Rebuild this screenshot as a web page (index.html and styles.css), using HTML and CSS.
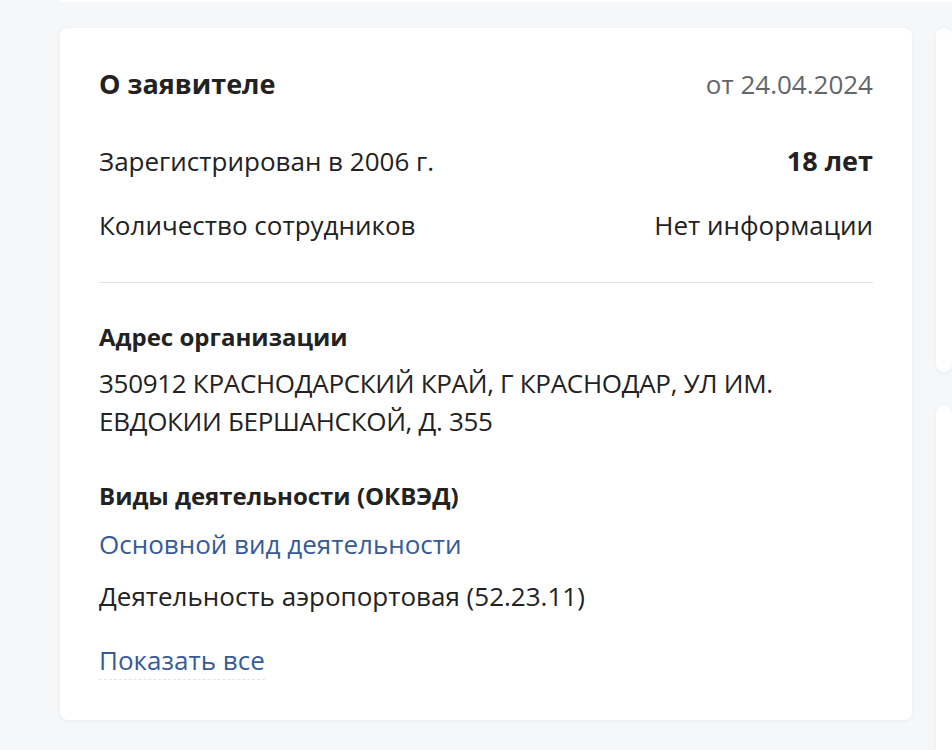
FILE: index.html
```html
<!DOCTYPE html>
<html lang="ru">
<head>
<meta charset="utf-8">
<link rel="stylesheet" href="styles.css">
</head>
<body>
<div class="page">
  <div class="prev-card"></div>
  <div class="layout">
    <section class="card">
      <div class="head">
        <h2 class="title">О заявителе</h2>
        <span class="date">от 24.04.2024</span>
      </div>
      <div class="rows">
        <div class="row">
          <span>Зарегистрирован в 2006 г.</span>
          <span class="strong">18 лет</span>
        </div>
        <div class="row">
          <span>Количество сотрудников</span>
          <span>Нет информации</span>
        </div>
      </div>
      <hr class="divider">
      <h3 class="sub">Адрес организации</h3>
      <p class="text address">350912 КРАСНОДАРСКИЙ КРАЙ, Г КРАСНОДАР, УЛ ИМ. ЕВДОКИИ БЕРШАНСКОЙ, Д. 355</p>
      <h3 class="sub sub-okved">Виды деятельности (ОКВЭД)</h3>
      <div class="link-label">Основной вид деятельности</div>
      <p class="text okved">Деятельность аэропортовая (52.23.11)</p>
      <a class="show-all" href="#">Показать все</a>
    </section>
    <aside class="side">
      <div class="side-card side-card-1"></div>
      <div class="side-card side-card-2"></div>
    </aside>
  </div>
</div>
</body>
</html>
```
FILE: styles.css
```css
* { box-sizing: border-box; }
html, body {
  margin: 0;
  padding: 0;
  background: #f6f7f9;
  overflow: hidden;
}
body {
  font-family: "Open Sans", "Noto Sans", sans-serif;
  color: #222;
  width: 952px;
  height: 750px;
}
.page {
  padding-left: 60px;
  height: 750px;
  overflow: hidden;
}
.prev-card {
  height: 2px;
  background: #fff;
  width: 892px;
}
.layout {
  display: grid;
  grid-template-columns: 852px 16px;
  column-gap: 24px;
  margin-top: 26px;
}
.card {
  background: #fff;
  border-radius: 8px;
  box-shadow: 0 1px 4px rgba(0, 0, 0, 0.06);
  padding: 38px 39px 39px;
  height: 692px;
}
.head {
  display: flex;
  justify-content: space-between;
  align-items: center;
  height: 36px;
}
.title {
  margin: 0;
  font-size: 27px;
  font-weight: 700;
  line-height: 36px;
  color: #222;
}
.date {
  font-size: 26px;
  line-height: 36px;
  color: #62666c;
}
.rows {
  margin-top: 40px;
  display: flex;
  flex-direction: column;
  gap: 26px;
}
.row {
  display: flex;
  justify-content: space-between;
  align-items: center;
  font-size: 26px;
  line-height: 38px;
}
.strong {
  font-weight: 700;
  font-size: 27px;
}
.divider {
  border: 0;
  border-top: 1px solid #dfe3e8;
  margin: 38px 0 0;
  height: 0;
}
.sub {
  margin: 35px 0 0;
  font-size: 24px;
  font-weight: 700;
  line-height: 38px;
}
.sub-okved {
  margin-top: 37px;
}
.text {
  margin: 9px 0 0;
  font-size: 26px;
  line-height: 37.5px;
}
.address {
  letter-spacing: -0.3px;
}
.link-label {
  margin-top: 10px;
  font-size: 26px;
  line-height: 38px;
  color: #365b98;
}
.okved {
  margin-top: 15px;
}
.show-all {
  display: inline-block;
  margin-top: 25px;
  font-size: 26px;
  line-height: 38px;
  color: #365b98;
  text-decoration: none;
  border-bottom: 1px dashed #e1e4e8;
}
.side {
  display: flex;
  flex-direction: column;
  gap: 33px;
}
.side-card {
  background: #fff;
  border-radius: 8px;
  box-shadow: 0 1px 4px rgba(0, 0, 0, 0.06);
}
.side-card-1 { height: 344px; }
.side-card-2 { height: 400px; }
```
